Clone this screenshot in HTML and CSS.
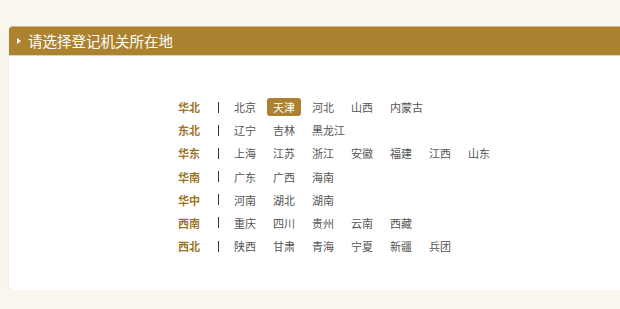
FILE: index.html
```html
<!DOCTYPE html>
<html lang="zh">
<head>
<meta charset="utf-8">
<link rel="stylesheet" href="styles.css">
</head>
<body>
<div class="card">
  <div class="card-head"><span class="tri"></span>请选择登记机关所在地</div>
  <div class="card-body">
    <div class="regions">
      <div class="row"><span class="area">华北</span><span class="sep"></span><span class="item">北京</span><span class="item active">天津</span><span class="item">河北</span><span class="item">山西</span><span class="item">内蒙古</span></div>
      <div class="row"><span class="area">东北</span><span class="sep"></span><span class="item">辽宁</span><span class="item">吉林</span><span class="item">黑龙江</span></div>
      <div class="row"><span class="area">华东</span><span class="sep"></span><span class="item">上海</span><span class="item">江苏</span><span class="item">浙江</span><span class="item">安徽</span><span class="item">福建</span><span class="item">江西</span><span class="item">山东</span></div>
      <div class="row"><span class="area">华南</span><span class="sep"></span><span class="item">广东</span><span class="item">广西</span><span class="item">海南</span></div>
      <div class="row"><span class="area">华中</span><span class="sep"></span><span class="item">河南</span><span class="item">湖北</span><span class="item">湖南</span></div>
      <div class="row"><span class="area">西南</span><span class="sep"></span><span class="item">重庆</span><span class="item">四川</span><span class="item">贵州</span><span class="item">云南</span><span class="item">西藏</span></div>
      <div class="row"><span class="area">西北</span><span class="sep"></span><span class="item">陕西</span><span class="item">甘肃</span><span class="item">青海</span><span class="item">宁夏</span><span class="item">新疆</span><span class="item">兵团</span></div>
    </div>
  </div>
</div>
</body>
</html>
```

FILE: styles.css
```css
html, body {
  margin: 0;
  padding: 0;
  background: #f9f6ee;
  font-family: "Noto Sans CJK SC", "Noto Sans", sans-serif;
}
body {
  padding: 26px 0 0 9px;
  overflow: hidden;
}
.card {
  width: 640px;
  background: #fff;
  border-radius: 4px;
  box-shadow: 0 1px 2px rgba(0,0,0,0.12);
}
.card-head {
  height: 28px;
  background: #ab8230;
  border-top: 1px solid #d1bb86;
  border-bottom: 1px solid #e2d3ad;
  border-radius: 4px 4px 0 0;
  color: #fff;
  font-size: 14.5px;
  line-height: 28px;
  display: flex;
  align-items: center;
  padding-left: 8px;
}
.tri {
  width: 0;
  height: 0;
  border-left: 4px solid #fff;
  border-top: 3.5px solid transparent;
  border-bottom: 3.5px solid transparent;
  margin-right: 7px;
}
.card-body {
  height: 234px;
  padding-left: 169px;
  padding-top: 41px;
  box-sizing: border-box;
}
.regions {
  display: flex;
  flex-direction: column;
  gap: 3.2px;
}
.row {
  display: flex;
  align-items: center;
  height: 20px;
  font-size: 11px;
}
.area {
  color: #9b7526;
  font-weight: bold;
  width: 40px;
}
.sep {
  width: 1px;
  height: 11px;
  background: #333;
  margin-right: 9px;
}
.item {
  color: #555;
  padding: 2px 6px;
  margin-right: 5px;
  border-radius: 3px;
  line-height: 14px;
}
.item.active {
  background: #ab8230;
  color: #fff;
  padding: 2px 6px;
}
```
